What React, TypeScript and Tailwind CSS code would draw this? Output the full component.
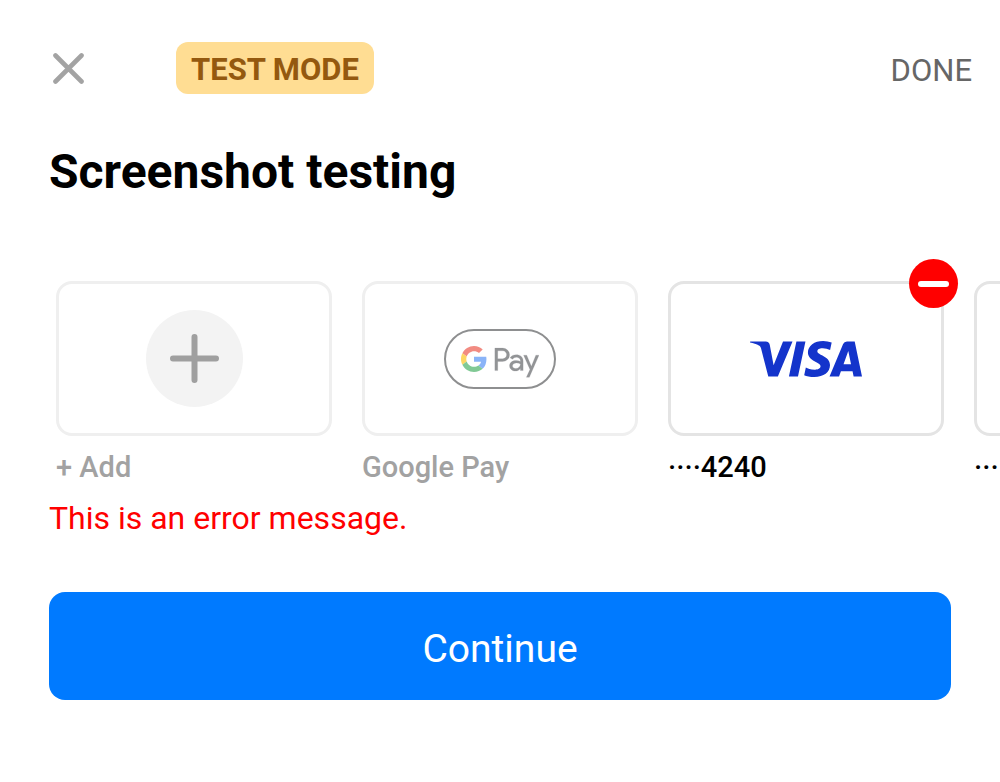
import type { ReactNode } from "react";
import { SiGooglepay, SiVisa } from "react-icons/si";

function CloseIcon() {
  return (
    <svg viewBox="0 0 32 32" className="size-8" fill="none" stroke="#a3a3a3" strokeWidth="4.6" strokeLinecap="round" aria-hidden="true">
      <path d="M3.500 3.500L29.500 29.500M29.500 3.500L3.500 29.500" />
    </svg>
  );
}

function PlusIcon() {
  return (
    <svg viewBox="0 0 98 98" className="size-[98px]" aria-hidden="true">
      <circle cx="49.500" cy="48.500" r="48.500" fill="#f3f3f3" />
      <path d="M49.500 27V70M28 48.500H71" stroke="#9f9f9f" strokeWidth="6" strokeLinecap="round" />
    </svg>
  );
}

function GoogleG() {
  return (
    <svg viewBox="0 0 48 48" className="size-[26px]" aria-hidden="true">
      <path fill="#f28b82" d="M24 9.500c3.540 0 6.710 1.220 9.210 3.600l6.850-6.850C35.900 2.380 30.470 0 24 0 14.620 0 6.510 5.380 2.560 13.220l7.980 6.190C12.430 13.720 17.740 9.500 24 9.500z" />
      <path fill="#8ab4f8" d="M46.980 24.550c0-1.570-.15-3.090-.38-4.550H24v9.020h12.940c-.58 2.960-2.260 5.480-4.780 7.180l7.730 6c4.510-4.180 7.090-10.360 7.090-17.650z" />
      <path fill="#fdd663" d="M10.530 28.590c-.48-1.450-.76-2.990-.76-4.590s.27-3.140.76-4.590l-7.980-6.190C.92 16.460 0 20.120 0 24c0 3.880.92 7.540 2.560 10.780l7.970-6.190z" />
      <path fill="#81c995" d="M24 48c6.480 0 11.930-2.130 15.890-5.810l-7.730-6c-2.150 1.450-4.920 2.300-8.160 2.300-6.260 0-11.570-4.220-13.470-9.910l-7.980 6.190C6.510 42.620 14.620 48 24 48z" />
    </svg>
  );
}

function GooglePayLogo() {
  return (
    <span className="flex h-[60px] w-28 items-center justify-center gap-[7px] rounded-full border-2 border-[#8e8f90]">
      <GoogleG />
      <SiGooglepay viewBox="10.200 5 13.800 12.270" className="h-10 w-[45px] text-[#929496]" stroke="#929496" strokeWidth="0.06" aria-hidden="true" />
    </span>
  );
}

type MethodProps = { label: string; disabled?: boolean; onRemove?: boolean; children?: ReactNode };

function PaymentMethod({ label, disabled, onRemove, children }: MethodProps) {
  return (
    <li className="relative w-[276px] shrink-0">
      <button
        type="button"
        disabled={disabled}
        aria-label={label}
        className={`flex h-[155px] w-full items-center justify-center rounded-2xl border-3 bg-white ${disabled ? "border-[#efefef]" : "border-[#e4e4e4]"}`}
      >
        {children}
      </button>
      <p className={`mt-[11px] text-[29px] leading-10 font-medium whitespace-nowrap ${disabled ? "text-[#a2a2a2]" : "text-black"}`}>{label}</p>
      {onRemove && (
        <button type="button" aria-label="Remove card" className="absolute -top-[22px] -right-[14px] flex size-[49px] items-center justify-center rounded-full bg-[#ff0000]">
          <span className="h-[6px] w-[31px] rounded-full bg-white" />
        </button>
      )}
    </li>
  );
}

export default function App() {
  return (
    <main className="min-h-screen overflow-hidden bg-white font-['Roboto',sans-serif]">
      <header className="flex items-center pt-[42px] pr-7 pl-[52px]">
        <button type="button" aria-label="Close" className="mr-[92px]">
          <CloseIcon />
        </button>
        <span className="rounded-xl bg-[#ffdd93] px-[15px] pt-2 pb-1 text-[31px] leading-10 font-bold text-[#94590f]">TEST MODE</span>
        <button type="button" className="ml-auto pt-[6px] text-[31px] leading-10 text-[#666666]">
          DONE
        </button>
      </header>
      <h1 className="mt-12 pl-[49px] text-5xl leading-[60px] font-bold text-black">Screenshot testing</h1>
      <ul className="mt-[79px] flex gap-[30px] pl-14">
        <PaymentMethod label="+ Add" disabled>
          <PlusIcon />
        </PaymentMethod>
        <PaymentMethod label="Google Pay" disabled>
          <GooglePayLogo />
        </PaymentMethod>
        <PaymentMethod label="····4240" onRemove>
          <SiVisa className="size-28 text-[#1434cb]" aria-hidden="true" />
        </PaymentMethod>
        <PaymentMethod label="····4242" onRemove>
          <SiVisa className="size-28 text-[#1434cb]" aria-hidden="true" />
        </PaymentMethod>
      </ul>
      <p className="mt-[11px] pl-[49px] text-[32px] leading-10 text-[#ff0000]">This is an error message.</p>
      <div className="mt-[54px] px-[49px]">
        <button type="button" className="h-[108px] w-full rounded-2xl bg-[#007aff] pt-[6px] text-[39px] text-white">
          Continue
        </button>
      </div>
    </main>
  );
}
